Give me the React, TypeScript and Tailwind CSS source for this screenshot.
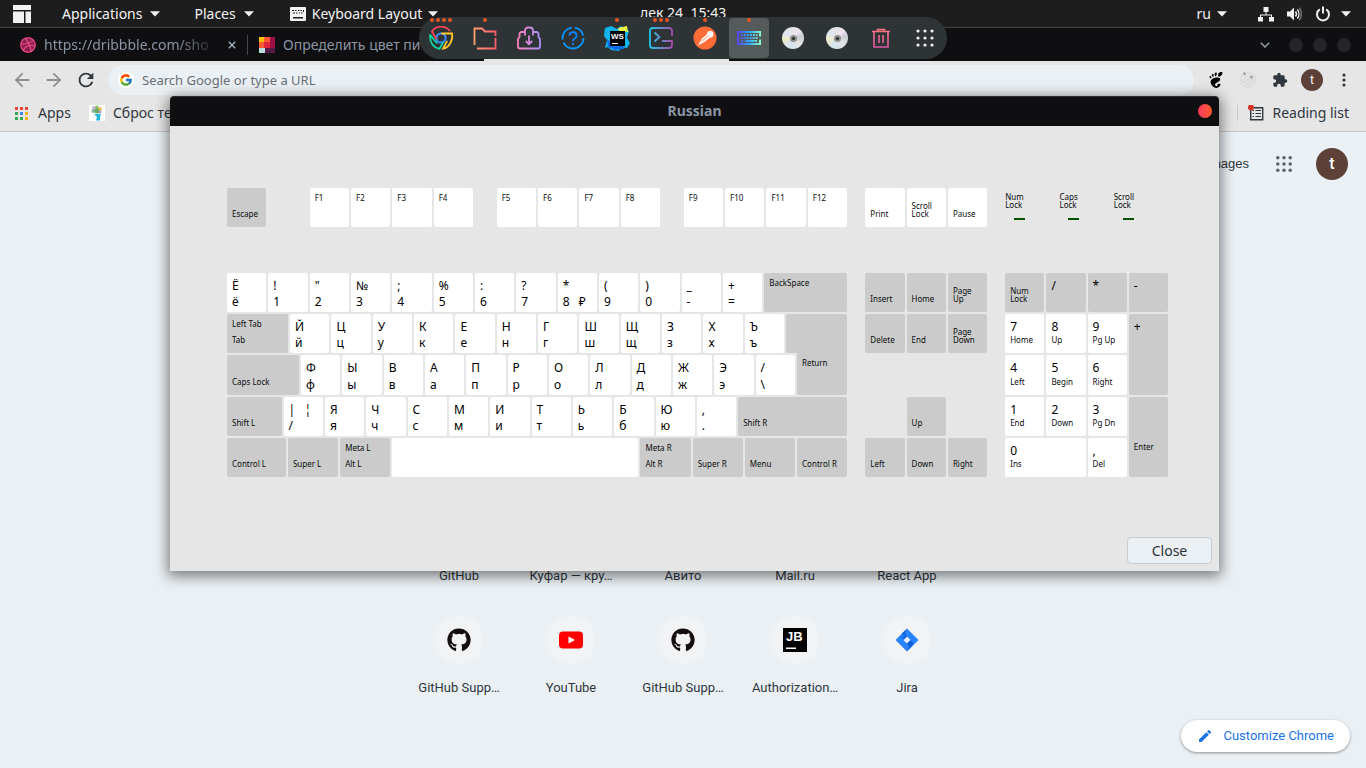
import type { CSSProperties, ReactNode } from "react";
import { FaDribbble, FaGithub } from "react-icons/fa";
import { FcGoogle } from "react-icons/fc";
import { MdArrowBack, MdArrowForward, MdEdit, MdExtension, MdRefresh } from "react-icons/md";
import { SiGnome } from "react-icons/si";

/* ---------- Keyboard data ---------- */

type KeySpec = {
  w?: number;
  gray?: boolean;
  top?: string[];
  bottom?: string[];
  topSmall?: string;
  bottomSmall?: string;
  space?: boolean;
  shape?: string;
};

const ROW_UNITS = 286;
const KEY = 19;

const letters = (pairs: string): KeySpec[] =>
  pairs.split(" ").map((p) => ({ top: [p[0]], bottom: [p[1]] }));

const fKeys = (from: number): KeySpec[] =>
  [0, 1, 2, 3].map((i) => ({ topSmall: `F${from + i}` }));

const functionRow: KeySpec[] = [
  { gray: true, bottomSmall: "Escape" },
  { space: true, w: 19 },
  ...fKeys(1),
  { space: true, w: 10 },
  ...fKeys(5),
  { space: true, w: 10 },
  ...fKeys(9),
];

const mainRows: KeySpec[][] = [
  [
    ...letters('Ёё !1 "2 №3 ;4 %5 :6 ?7'),
    { top: ["*"], bottom: ["8", "₽"] },
    ...letters("(9 )0 _- +="),
    { w: 39, gray: true, topSmall: "BackSpace" },
  ],
  [
    { w: 29, gray: true, topSmall: "Left Tab", bottomSmall: "Tab" },
    ...letters("Йй Цц Уу Кк Ее Нн Гг Шш Щщ Зз Хх Ъъ"),
    { w: 29, gray: true, shape: "rounded-br-none" },
  ],
  [
    { w: 34, gray: true, bottomSmall: "Caps Lock" },
    ...letters("Фф Ыы Вв Аа Пп Рр Оо Лл Дд Жж Ээ /\\"),
    { w: 24, gray: true, topSmall: "Return", shape: "rounded-t-none -mt-[2px]" },
  ],
  [
    { w: 26, gray: true, bottomSmall: "Shift L" },
    { top: ["|", "¦"], bottom: ["/"] },
    ...letters("Яя Чч Сс Мм Ии Тт Ьь Бб Юю ,."),
    { w: 51, gray: true, bottomSmall: "Shift R" },
  ],
  [
    { w: 28, gray: true, bottomSmall: "Control L" },
    { w: 24, gray: true, bottomSmall: "Super L" },
    { w: 24, gray: true, topSmall: "Meta L", bottomSmall: "Alt L" },
    { w: 114 },
    { w: 24, gray: true, topSmall: "Meta R", bottomSmall: "Alt R" },
    { w: 24, gray: true, bottomSmall: "Super R" },
    { w: 24, gray: true, bottomSmall: "Menu" },
    { w: 24, gray: true, bottomSmall: "Control R" },
  ],
];

const systemKeys: KeySpec[] = [
  { bottomSmall: "Print" },
  { bottomSmall: "Scroll\nLock" },
  { bottomSmall: "Pause" },
];

const navKeys: (KeySpec & { cell?: string })[] = [
  { gray: true, bottomSmall: "Insert" },
  { gray: true, bottomSmall: "Home" },
  { gray: true, bottomSmall: "Page\nUp" },
  { gray: true, bottomSmall: "Delete" },
  { gray: true, bottomSmall: "End" },
  { gray: true, bottomSmall: "Page\nDown" },
  { gray: true, bottomSmall: "Up", cell: "col-start-2 row-start-4" },
  { gray: true, bottomSmall: "Left", cell: "col-start-1 row-start-5" },
  { gray: true, bottomSmall: "Down", cell: "row-start-5" },
  { gray: true, bottomSmall: "Right", cell: "row-start-5" },
];

const padKeys: (KeySpec & { cell?: string })[] = [
  { gray: true, bottomSmall: "Num\nLock" },
  { gray: true, top: ["/"] },
  { gray: true, top: ["*"] },
  { gray: true, top: ["-"] },
  { top: ["7"], bottomSmall: "Home" },
  { top: ["8"], bottomSmall: "Up" },
  { top: ["9"], bottomSmall: "Pg Up" },
  { gray: true, top: ["+"], cell: "row-span-2" },
  { top: ["4"], bottomSmall: "Left" },
  { top: ["5"], bottomSmall: "Begin" },
  { top: ["6"], bottomSmall: "Right" },
  { top: ["1"], bottomSmall: "End" },
  { top: ["2"], bottomSmall: "Down" },
  { top: ["3"], bottomSmall: "Pg Dn" },
  { gray: true, bottomSmall: "Enter", cell: "row-span-2", shape: "pb-[26px]" },
  { top: ["0"], bottomSmall: "Ins", cell: "col-span-2" },
  { top: [","], bottomSmall: "Del" },
];

/* ---------- Keyboard ---------- */

function Legend({ marks }: { marks: string[] }) {
  return (
    <span className="flex text-[12px] leading-[16px] text-black">
      {marks.map((m) => (
        <span key={m} className="w-4 whitespace-nowrap">
          {m}
        </span>
      ))}
    </span>
  );
}

function Key({ spec, cell = "" }: { spec: KeySpec; cell?: string }) {
  const color = spec.gray ? "bg-[#cbcbcb]" : "bg-white";
  const padBottom = spec.shape?.includes("pb-") ? "" : spec.bottom ? "pb-[2px]" : "pb-[9px]";
  const padTop = spec.top ? "pt-[5px]" : "pt-[4px]";
  return (
    <button
      type="button"
      className={`flex min-w-0 flex-1 flex-col rounded-[2px] pl-[5px] text-left text-[#080b0d] ${color} ${padTop} ${padBottom} ${cell} ${spec.shape ?? ""}`}
    >
      {spec.top && <Legend marks={spec.top} />}
      {spec.topSmall && <span className="whitespace-nowrap text-[8px] leading-[12px]">{spec.topSmall}</span>}
      <span className="mt-auto block">
        {spec.bottom && <Legend marks={spec.bottom} />}
        {spec.bottomSmall && (
          <span className="block whitespace-pre text-[8px] leading-[8px]">{spec.bottomSmall}</span>
        )}
      </span>
    </button>
  );
}

function KeyRow({ keys }: { keys: KeySpec[] }) {
  return (
    <div className="-mr-[2px] flex min-h-0">
      {keys.map((k, i) => {
        const style: CSSProperties = { width: `${((k.w ?? KEY) / ROW_UNITS) * 100}%` };
        return (
          <div key={i} className="flex shrink-0 pr-[2px]" style={style}>
            {!k.space && <Key spec={k} />}
          </div>
        );
      })}
    </div>
  );
}

function Indicator({ label }: { label: string }) {
  return (
    <div className="pt-[5px] text-[8px] leading-[8px] text-[#080b0d]">
      <div className="whitespace-pre">{label}</div>
      <div className="ml-[9px] mt-[9px] h-[2px] w-[11px] bg-[#005200]" />
    </div>
  );
}

function Keyboard() {
  return (
    <div className="grid grid-cols-[621fr_122fr_163fr] grid-rows-[39px_204px] gap-x-[18px] gap-y-[46px]">
      <KeyRow keys={functionRow} />
      <div className="grid grid-cols-3 gap-[2px]">
        {systemKeys.map((k, i) => (
          <Key key={i} spec={k} />
        ))}
      </div>
      <div className="grid grid-cols-3">
        <Indicator label={"Num\nLock"} />
        <Indicator label={"Caps\nLock"} />
        <Indicator label={"Scroll\nLock"} />
      </div>
      <div className="grid grid-rows-5 gap-[2px]">
        {mainRows.map((r, i) => (
          <KeyRow key={i} keys={r} />
        ))}
      </div>
      <div className="grid grid-cols-3 grid-rows-5 gap-[2px]">
        {navKeys.map((k, i) => (
          <Key key={i} spec={k} cell={k.cell} />
        ))}
      </div>
      <div className="grid grid-cols-4 grid-rows-5 gap-[2px]">
        {padKeys.map((k, i) => (
          <Key key={i} spec={k} cell={k.cell} />
        ))}
      </div>
    </div>
  );
}

function LayoutDialog() {
  return (
    <section
      role="dialog"
      aria-labelledby="layout-title"
      className="absolute left-[170px] right-[147px] top-24 z-20 rounded-t-[4px] bg-[#e6e6e6] shadow-[0_3px_14px_2px_rgba(0,0,0,0.5)]"
    >
      <header className="grid h-[30px] grid-cols-[1fr_auto_1fr] items-center rounded-t-[4px] border-t border-[#2c2f30] bg-[#0f0f11] px-[7px] pb-[2px]">
        <h1 id="layout-title" className="col-start-2 text-[14px] font-bold leading-5 text-[#8b95a4]">
          Russian
        </h1>
        <button
          type="button"
          aria-label="Close window"
          className="size-[14px] justify-self-end rounded-full bg-linear-to-r from-[#ff3860] to-[#ff5722]"
        />
      </header>
      <div className="pl-[57px] pr-[51px] pt-[62px]">
        <Keyboard />
      </div>
      <footer className="flex justify-end px-[7px] pb-[7px] pt-[60px]">
        <button
          type="button"
          className="h-[27px] w-[85px] rounded-[4px] border border-[#c8cdd2] bg-[#ebf0f4] text-[14px] leading-5 text-[#2b3036]"
        >
          Close
        </button>
      </footer>
    </section>
  );
}

/* ---------- Desktop top bar ---------- */

function Caret({ className = "" }: { className?: string }) {
  return (
    <svg viewBox="0 0 10 6" className={`h-[6px] w-[10px] shrink-0 ${className}`} fill="#f2f2f2">
      <path d="M0 .3h10L5 5.6z" />
    </svg>
  );
}

function TopBar() {
  return (
    <div className="grid h-7 grid-cols-[1fr_auto_1fr] items-center border-b border-[#424242] bg-[#1d1d1d] text-[14px] leading-5 text-[#f2f2f2]">
      <nav className="flex items-center pl-[13px]">
        <svg viewBox="0 0 18 18" className="size-[18px]" fill="#f2f2f2">
          <path d="M0 0h18v5H0zM0 6.5h11V18H0zM12.5 6.5H18V18h-5.500z" />
        </svg>
        <button type="button" className="ml-[31px] flex items-center gap-2 whitespace-nowrap">
          Applications
          <Caret />
        </button>
        <button type="button" className="ml-[34px] flex items-center gap-2">
          Places
          <Caret />
        </button>
        <button type="button" className="ml-[36px] flex items-center gap-[6px] whitespace-nowrap">
          <svg viewBox="0 0 16 14" className="h-[14px] w-4">
            <path fill="#f2f2f2" d="M1 0h14a1 1 0 0 1 1 1v12a1 1 0 0 1-1 1H1a1 1 0 0 1-1-1V1a1 1 0 0 1 1-1z" />
            <path
              fill="#1d1d1d"
              d="M2 3h2v1H2zM5 3h1.500v1H5zM8 3h1.500v1H8zM10.500 3H12v1h-1.500zM13 3h1v2h-1zM3 5.500h2v1H3zM6 5.500h1.500v1H6zM9 5.500h1v1H9zM11 5.500h1.500v1H11zM3 10h10v1.500H3z"
            />
          </svg>
          Keyboard Layout
          <Caret />
        </button>
      </nav>
      <time className="whitespace-nowrap pb-[1px]">дек 24&nbsp; 15:43</time>
      <div className="flex items-center justify-end pr-[15px]">
        <button type="button" className="flex items-center gap-[6px]">
          ru
          <Caret />
        </button>
        <svg viewBox="0 0 16 16" className="ml-[31px] size-4" fill="#f2f2f2">
          <path d="M5.500 1h5v5h-5zM0 11h5v4.500H0zM11 11h5v4.500h-5zM7.500 6h1v2.500h5.500V11h-1V9.500H3V11H2V8.500h5.500z" />
        </svg>
        <svg viewBox="0 0 16 16" className="ml-3 size-4" fill="none">
          <path fill="#f2f2f2" d="M1 5.500h3L8 1.500v13L4 10.500H1z" />
          <path stroke="#f2f2f2" strokeWidth="1.400" d="M9.500 5.500a4 4 0 0 1 0 5M11.300 3.500a7 7 0 0 1 0 9" />
          <path stroke="#777" strokeWidth="1.400" d="M13.200 1.800a10 10 0 0 1 0 12.400" />
        </svg>
        <svg viewBox="0 0 16 16" className="ml-[13px] size-4" fill="none" stroke="#f2f2f2" strokeWidth="2">
          <path d="M4.800 3.400a6 6 0 1 0 6.400 0M8 .5v7" />
        </svg>
        <Caret className="ml-[10px]" />
      </div>
    </div>
  );
}

/* ---------- Dock ---------- */

function ChromeIcon() {
  return (
    <svg viewBox="0 0 24 24" className="size-6" fill="none" strokeWidth="1.800" strokeLinecap="round">
      <circle cx="12" cy="12" r="4.600" stroke="#3d8bff" strokeWidth="2" />
      <path stroke="#ff4557" d="M3 5.500C7-.8 16-.8 20.500 4.500M3 5.500L7 12.500" />
      <path stroke="#ffc928" d="M13 7.500h10C24.300 14 20 22 14 22.600l3.800-7" />
      <path stroke="#10d8a0" d="M1.200 9C.3 17 5 21.800 10.500 22.800l3.500-6M1.200 9l6.500 8" />
    </svg>
  );
}

function FolderIcon() {
  return (
    <svg viewBox="0 0 24 24" className="size-6" fill="none">
      <defs>
        <linearGradient id="folder" x1="0" x2="1">
          <stop stopColor="#ffa070" />
          <stop offset="1" stopColor="#ff5c6c" />
        </linearGradient>
      </defs>
      <path stroke="url(#folder)" strokeWidth="1.800" d="M1.500 19V2.500h7.500l3 3h10.500V10M22.500 12v10.500H4" />
    </svg>
  );
}

function SoftwareIcon() {
  return (
    <svg viewBox="0 0 24 24" className="size-6" fill="none">
      <defs>
        <linearGradient id="software" x1="0" x2="24" y1="0" y2="0" gradientUnits="userSpaceOnUse">
          <stop stopColor="#ff80b8" />
          <stop offset="1" stopColor="#a590ff" />
        </linearGradient>
      </defs>
      <path
        stroke="url(#software)"
        strokeWidth="1.800"
        d="M8 9.500V4.500a3 3 0 0 1 3-3h2a3 3 0 0 1 3 3v5M8 6H4.500a2 2 0 0 0-2 2v3L1 13v7.500a2 2 0 0 0 2 2h18a2 2 0 0 0 2-2V13l-1.500-2V8a2 2 0 0 0-2-2H16M12 9.500V18M8.800 15l3.200 3.200 3.200-3.200"
      />
    </svg>
  );
}

function HelpIcon() {
  return (
    <svg viewBox="0 0 24 24" className="size-6" fill="none" stroke="#0a84ff" strokeWidth="1.800">
      <circle cx="12" cy="12" r="10.500" strokeDasharray="28 3 17 3 12 3" stroke="#0996ff" />
      <path d="M8.500 9.500a3.500 3.500 0 1 1 5 3.200c-1 .5-1.500 1.200-1.500 2.500M12 17v2" />
    </svg>
  );
}

function WebStormIcon() {
  return (
    <svg viewBox="0 0 26 26" className="size-[26px]">
      <path fill="#13b5ee" d="M1 3l6-2 6 3 4-3 8 5-2 7 3 5-3 5-6-1-2 4-8-1-3-3-3 1 2-8-3-4z" />
      <path fill="#e9f344" d="M14 3l9-2 1 6-9-1z" />
      <path fill="#086fe8" d="M3 14l5 4h10l2 6-9 1-7-3z" />
      <rect x="6" y="6" width="15" height="15" />
      <text x="7" y="14" fontSize="8" fontWeight="700" fill="#fff" fontFamily="Liberation Sans, sans-serif">
        WS
      </text>
      <path fill="#fff" d="M8 18h6v1H8z" />
    </svg>
  );
}

function TerminalIcon() {
  return (
    <svg viewBox="0 0 24 24" className="size-6" fill="none">
      <defs>
        <linearGradient id="terminal" x1="0" x2="1">
          <stop stopColor="#1ec8e8" />
          <stop offset="1" stopColor="#a84fae" />
        </linearGradient>
      </defs>
      <path
        stroke="url(#terminal)"
        strokeWidth="1.800"
        d="M23 10V5a3 3 0 0 0-3-3H4a3 3 0 0 0-3 3v14a3 3 0 0 0 3 3h16a3 3 0 0 0 3-3v-4h-10M5.500 6.500l5 4.500-5 4.500"
      />
    </svg>
  );
}

function PostmanIcon() {
  return (
    <svg viewBox="0 0 24 24" className="size-6">
      <circle cx="12" cy="12" r="11.500" fill="#ff6c37" />
      <path fill="#fff" d="M5 19.500l4-7 5-4.200a3.200 3.200 0 1 1 3 3.200l-4.800 4z" />
      <path stroke="#ff6c37" strokeWidth=".8" d="M8.500 15.500l7-6" />
    </svg>
  );
}

function KeyboardIcon() {
  return (
    <svg viewBox="0 0 24 16" className="h-4 w-6" fill="none">
      <defs>
        <linearGradient id="keys" x1="0" x2="24" y1="0" y2="0" gradientUnits="userSpaceOnUse">
          <stop stopColor="#5b3df5" />
          <stop offset=".5" stopColor="#28a8ff" />
          <stop offset="1" stopColor="#8dffc4" />
        </linearGradient>
      </defs>
      <path stroke="url(#keys)" strokeWidth="2" d="M23 6.500V2H1v12h22V9.500" />
      <path
        stroke="url(#keys)"
        strokeWidth="2"
        strokeDasharray="2 1"
        d="M4 5h16.500M3.500 8.010h17M4 11h2.500M18 11.010h2.500"
      />
      <path stroke="url(#keys)" strokeWidth="2" d="M8 11h9v.01" />
    </svg>
  );
}

function DiscIcon() {
  return (
    <span className="flex size-[22px] items-center justify-center rounded-full bg-[conic-gradient(#e4e4e4,#f0e4f4_40deg,#c8ccd0_80deg,#e4e4e4_130deg,#d4e4f0_210deg,#f0ecc8_260deg,#dde4f2_300deg,#e4e4e4)]">
      <span className="flex size-[7px] items-center justify-center rounded-full bg-[#8c8c8c]">
        <span className="size-[3px] rounded-full bg-[#2a2a2a]" />
      </span>
    </span>
  );
}

function TrashIcon() {
  return (
    <svg viewBox="0 0 20 22" className="h-[22px] w-5" fill="none">
      <defs>
        <linearGradient id="trash" x1="0" x2="0" y1="0" y2="22" gradientUnits="userSpaceOnUse">
          <stop stopColor="#ff7a7a" />
          <stop offset="1" stopColor="#dd52a8" />
        </linearGradient>
      </defs>
      <path stroke="url(#trash)" strokeWidth="1.600" d="M1 4.500h18M6.500 4.500v-2h7v2M3 4.500V20h14V4.500M8 8v8M12 8v8" />
    </svg>
  );
}

function AppsGridIcon({ fill, size, r }: { fill: string; size: string; r: number }) {
  return (
    <svg viewBox="0 0 18 18" className={size} fill={fill}>
      {[2, 9, 16].flatMap((y) => [2, 9, 16].map((x) => <circle key={`${x}-${y}`} cx={x} cy={y} r={r} />))}
    </svg>
  );
}

const dockItems: { label: string; icon: ReactNode; dots: number; active?: boolean }[] = [
  { label: "Chrome", icon: <ChromeIcon />, dots: 4 },
  { label: "Files", icon: <FolderIcon />, dots: 1 },
  { label: "Software", icon: <SoftwareIcon />, dots: 0 },
  { label: "Help", icon: <HelpIcon />, dots: 0 },
  { label: "WebStorm", icon: <WebStormIcon />, dots: 1 },
  { label: "Terminal", icon: <TerminalIcon />, dots: 3 },
  { label: "Postman", icon: <PostmanIcon />, dots: 1 },
  { label: "Keyboard", icon: <KeyboardIcon />, dots: 1, active: true },
  { label: "Disc 1", icon: <DiscIcon />, dots: 0 },
  { label: "Disc 2", icon: <DiscIcon />, dots: 0 },
  { label: "Trash", icon: <TrashIcon />, dots: 0 },
  { label: "Show applications", icon: <AppsGridIcon fill="#f0f0f0" size="size-[18px]" r={1.6} />, dots: 0 },
];

function Dock() {
  return (
    <div className="absolute left-1/2 top-[17px] z-10 flex h-[42px] -translate-x-1/2 rounded-full bg-[#2e3436]">
      {dockItems.map((d) => (
        <button
          key={d.label}
          type="button"
          aria-label={d.label}
          className={`relative mx-[2px] my-[1px] flex w-10 items-center justify-center rounded-[4px] ${d.active ? "bg-[#555a5b]" : ""}`}
        >
          {d.icon}
          <span className="absolute inset-x-0 top-0 flex justify-center gap-[2px]">
            {Array.from({ length: d.dots }, (_, i) => (
              <span key={i} className="size-1 rounded-full bg-[#e95420]" />
            ))}
          </span>
        </button>
      ))}
    </div>
  );
}

/* ---------- Browser ---------- */

function TabStrip() {
  return (
    <div className="flex h-[33px] items-center bg-[#0f0f11] text-[14px] leading-5 text-[#8b95a4]">
      <div className="flex w-[247px] items-center pl-5">
        <FaDribbble className="size-4 shrink-0 rounded-full bg-[#8c1f4b] text-[#ea4c89]" />
        <span className="ml-2 w-[176px] overflow-hidden whitespace-nowrap mask-r-from-75% mask-r-to-100%">
          https://dribbble.com/sho
        </span>
        <button type="button" aria-label="Close tab" className="ml-2">
          <svg viewBox="0 0 10 10" className="size-2" stroke="#a4adb8" strokeWidth="1.800">
            <path d="M1 1l8 8M9 1L1 9" />
          </svg>
        </button>
      </div>
      <div className="flex h-5 w-[237px] items-center border-l border-[#45484c] pl-[11px]">
        <svg viewBox="0 0 16 16" className="size-4 shrink-0">
          <path fill="#ffbe00" d="M0 0h6v6H0z" />
          <path fill="#ff5a36" d="M5 0h6v6H5zM0 5h6v6H0z" />
          <path fill="#e0243c" d="M5 5h6v6H5z" />
          <path fill="#9c1046" d="M11 0h5v11h-5z" />
          <path fill="#b8dfdc" d="M0 11h6v5H0z" />
          <path fill="#561a45" d="M6 11h10v5H6z" />
        </svg>
        <span className="ml-2 overflow-hidden whitespace-nowrap">Определить цвет пи</span>
      </div>
      <div className="h-full w-[245px] bg-[#e6e6e6]" />
      <div className="ml-auto flex items-center pr-[15px]">
        <svg viewBox="0 0 10 6" className="h-[6px] w-[10px]" fill="none" stroke="#8b95a4" strokeWidth="1.600">
          <path d="M.8.800L5 5 9.200.800" />
        </svg>
        <span className="ml-[19px] flex gap-[10px]">
          {["Minimize", "Maximize", "Close browser"].map((l) => (
            <button key={l} type="button" aria-label={l} className="size-[14px] rounded-full bg-[#252527]" />
          ))}
        </span>
      </div>
    </div>
  );
}

function Toolbar() {
  return (
    <div className="flex h-[38px] items-center bg-[#e6e6e6] pl-[11px] pr-5">
      <div className="flex gap-[10px]">
        <button type="button" aria-label="Back">
          <MdArrowBack className="size-[22px] text-[#8e8f91]" />
        </button>
        <button type="button" aria-label="Forward">
          <MdArrowForward className="size-[22px] text-[#8e8f91]" />
        </button>
        <button type="button" aria-label="Reload">
          <MdRefresh className="size-[22px] text-[#2f363d]" />
        </button>
      </div>
      <label className="ml-[11px] flex h-[30px] flex-1 items-center gap-2 rounded-full bg-[#ebf0f4] pl-[10px]">
        <span className="flex size-4 items-center justify-center rounded-full bg-white">
          <FcGoogle className="size-[14px]" />
        </span>
        <input
          type="text"
          aria-label="Address"
          placeholder="Search Google or type a URL"
          className="flex-1 bg-transparent text-[13px] leading-5 outline-none placeholder:text-[#696e74]"
        />
      </label>
      <div className="ml-[14px] flex items-center">
        <SiGnome className="size-4 text-black" />
        <svg viewBox="0 0 16 16" className="ml-4 size-4" fill="none">
          <circle cx="8" cy="8" r="7.300" stroke="#d4d4d4" />
          <circle cx="8" cy="8" r="4" stroke="#d0d0d0" />
          <circle cx="8" cy="8" r="1.500" fill="#d0d0d0" />
          <circle cx="4.500" cy="1.800" r="1.500" fill="#a4a4a4" />
          <circle cx="11.500" cy="5" r="1.600" fill="#a4a4a4" />
        </svg>
        <MdExtension className="ml-4 size-4 text-[#2f363d]" />
        <span className="ml-[13px] flex size-[22px] items-center justify-center rounded-full bg-[#5d4037] font-['Roboto',sans-serif] text-[12px] leading-4 text-white">
          t
        </span>
        <svg viewBox="0 0 4 14" className="ml-[19px] h-[14px] w-1" fill="#2f363d">
          <circle cx="2" cy="2" r="1.600" />
          <circle cx="2" cy="7" r="1.600" />
          <circle cx="2" cy="12" r="1.600" />
        </svg>
      </div>
    </div>
  );
}

function BookmarksBar() {
  return (
    <div className="flex h-[33px] items-center border-b border-[#c3c8ce] bg-[#e6e6e6] pb-[4px] pl-[15px] pr-[17px] text-[14px] leading-5 text-[#2f363d]">
      <a href="#apps" className="flex items-center gap-[10px]">
        <svg viewBox="0 0 13 13" className="size-[13px]">
          <path fill="#ea4335" d="M0 0h3v3H0zM5 0h3v3H5zM10 0h3v3h-3z" />
          <path fill="#34a853" d="M0 5h3v3H0zM0 10h3v3H0zM5 10h3v3H5z" />
          <path fill="#4285f4" d="M5 5h3v3H5z" />
          <path fill="#fbaf05" d="M10 5h3v3h-3zM10 10h3v3h-3z" />
        </svg>
        Apps
      </a>
      <a href="#reset" className="ml-[18px] flex items-center gap-2 whitespace-nowrap">
        <svg viewBox="0 0 16 16" className="size-4">
          <path fill="#fff" d="M0 0h16v16H0z" />
          <circle cx="5" cy="3" r="2" fill="#c7b5de" />
          <circle cx="8" cy="2.500" r="2" fill="#8bc06a" />
          <circle cx="11" cy="4" r="2" fill="#e3c35a" />
          <circle cx="4.500" cy="6" r="2" fill="#88b8a0" />
          <circle cx="8" cy="6" r="2.500" fill="#6ca85c" />
          <circle cx="11" cy="7" r="1.500" fill="#b0a0d0" />
          <path fill="#1fb9de" d="M5 9h7l-1 3v3.500H7L8 12z" />
        </svg>
        Сброс те
      </a>
      <button
        type="button"
        className="ml-auto flex items-center gap-2 whitespace-nowrap border-l border-[#c3c8ce] pl-[10px] leading-4"
      >
        <svg viewBox="0 0 16 16" className="size-4" fill="none">
          <path stroke="#2f363d" strokeWidth="1.400" d="M2.700 2.700h12v12h-12z" />
          <path
            stroke="#2f363d"
            strokeWidth="1.200"
            d="M4.500 5.500H6M7.500 5.500h5.500M4.500 8.500H6M7.500 8.500h5.500M4.500 11.500H6M7.500 11.500h5.500"
          />
          <circle cx="3" cy="2.500" r="3" fill="#db3328" />
        </svg>
        Reading list
      </button>
    </div>
  );
}

function YouTubeIcon() {
  return (
    <svg viewBox="0 0 24 18" className="h-[18px] w-6">
      <rect y=".5" width="24" height="17" rx="4" fill="#f00" />
      <path fill="#fff" d="M9.500 5.500v7l6.500-3.500z" />
    </svg>
  );
}

function JetBrainsIcon() {
  return (
    <svg viewBox="0 0 24 24" className="size-6">
      <rect width="24" height="24" />
      <text x="3" y="13" fontSize="13" fontWeight="700" fill="#fff" fontFamily="Liberation Sans, sans-serif">
        JB
      </text>
      <path fill="#fff" d="M3 19.500h10v1.500H3z" />
    </svg>
  );
}

function JiraIcon() {
  return (
    <svg viewBox="0 0 24 24" className="size-6">
      <defs>
        <linearGradient id="jira-a" x1="1" y1="0" x2="0" y2="1">
          <stop offset=".2" stopColor="#0052cc" />
          <stop offset="1" stopColor="#2684ff" />
        </linearGradient>
      </defs>
      <path
        fill="#2684ff"
        fillRule="evenodd"
        d="M12 .5l11 11a.8.8 0 0 1 0 1L12 23.500l-11-11a.8.8 0 0 1 0-1zM12 8.500L8.500 12l3.500 3.500 3.500-3.500z"
      />
      <path fill="url(#jira-a)" d="M12 8.500C9.500 6 9.500 3 12 .5L6.500 6z M12 8.500L8.500 12 5 8z" />
      <path fill="#0f5fd8" d="M12 15.500l3.500-3.500 3 4-6.500 7.500c2.500-2.500 2.500-5.500 0-8z" />
    </svg>
  );
}

const shortcuts: { label: string; icon?: ReactNode }[] = [
  { label: "GitHub" },
  { label: "Куфар — кру…" },
  { label: "Авито" },
  { label: "Mail.ru" },
  { label: "React App" },
  { label: "GitHub Supp…", icon: <FaGithub className="size-6 text-[#130d0d]" /> },
  { label: "YouTube", icon: <YouTubeIcon /> },
  { label: "GitHub Supp…", icon: <FaGithub className="size-6 text-[#130d0d]" /> },
  { label: "Authorization…", icon: <JetBrainsIcon /> },
  { label: "Jira", icon: <JiraIcon /> },
];

function NewTabPage() {
  return (
    <main className="flex flex-1 flex-col bg-[#ebf0f4] font-['Roboto',sans-serif] text-[13px] text-[#2f363d]">
      <div className="flex h-16 items-center justify-end pr-[18px]">
        <a href="#images" className="font-['Liberation_Sans',sans-serif] leading-5">
          Images
        </a>
        <button type="button" aria-label="Google apps" className="ml-[27px]">
          <AppsGridIcon fill="#5f6368" size="size-4" r={2} />
        </button>
        <button
          type="button"
          className="ml-6 size-8 rounded-full bg-[#5d4037] text-[16px] font-medium leading-8 text-white"
        >
          t
        </button>
      </div>
      <div className="mt-[308px] grid grid-cols-[repeat(5,112px)] justify-center gap-y-8">
        {shortcuts.map((s, i) => (
          <a key={i} href="#shortcut" className="flex h-20 flex-col items-center justify-between">
            <span className="flex size-12 items-center justify-center rounded-full bg-[#f1f3f4]">{s.icon}</span>
            <span className="whitespace-nowrap leading-4">{s.label}</span>
          </a>
        ))}
      </div>
      <div className="mt-auto flex justify-end pb-4 pr-4">
        <button
          type="button"
          className="flex h-8 items-center gap-[10px] rounded-full bg-white px-4 leading-5 text-[#1a73e8] shadow-[0_1px_3px_rgba(0,0,0,0.4)]"
        >
          <MdEdit className="size-4" />
          Customize Chrome
        </button>
      </div>
    </main>
  );
}

export default function App() {
  return (
    <div className="relative flex min-h-screen flex-col overflow-hidden font-['Noto_Sans','Open_Sans',sans-serif]">
      <TopBar />
      <TabStrip />
      <Toolbar />
      <BookmarksBar />
      <NewTabPage />
      <Dock />
      <LayoutDialog />
    </div>
  );
}
